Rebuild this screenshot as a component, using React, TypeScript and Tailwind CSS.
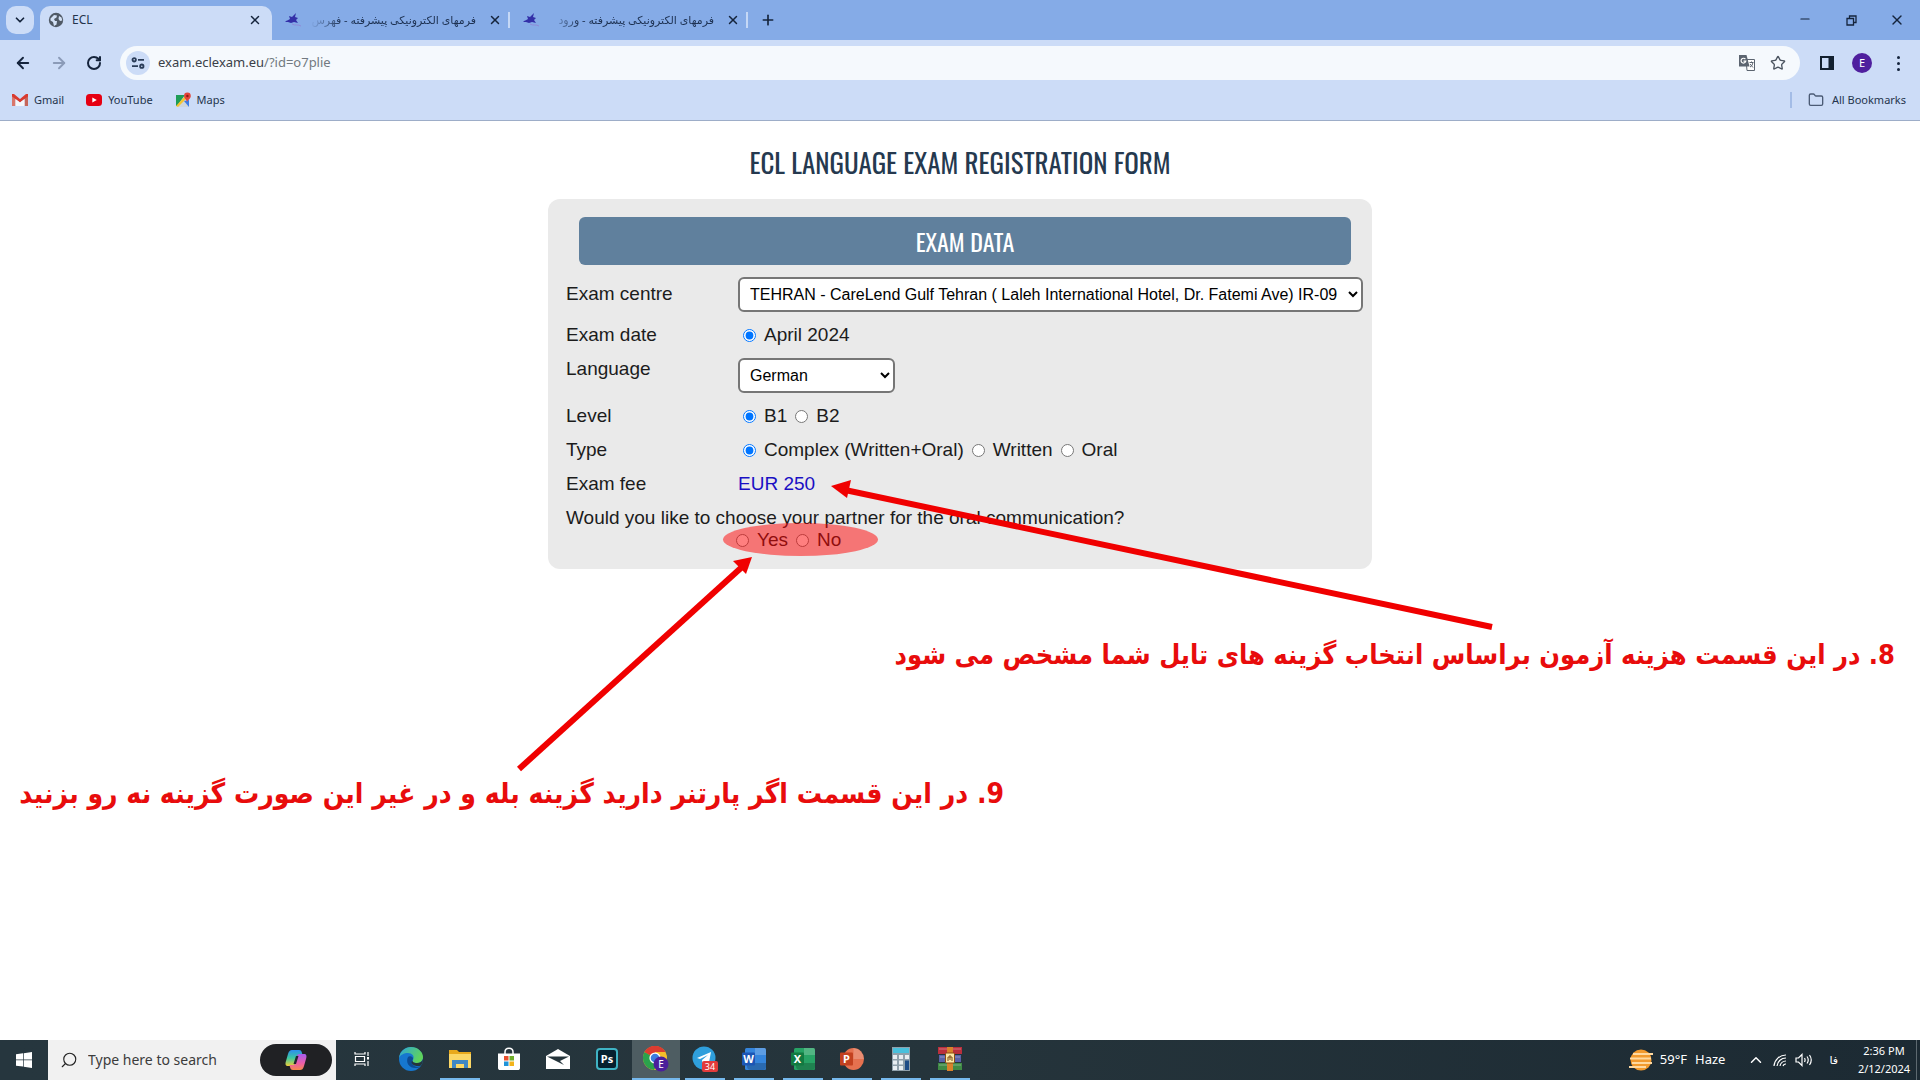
import type { ReactNode } from "react";
import {
  ArrowLeft,
  ArrowRight,
  ChevronDown,
  ChevronUp,
  Folder,
  Minus,
  Plus,
  RotateCw,
  Search,
  Star,
  X,
} from "lucide-react";

function GlobeIcon() {
  return (
    <svg viewBox="0 0 16 16" className="size-4 shrink-0">
      <circle cx="8" cy="8" r="7.2" fill="#505a66" />
      <path
        d="M2.5 6.5 6 3l3 .5-.5 2L6 7l1 2H9l-.5 3.500L6 14 5 10 2.500 8.500zM11 4l2.500 1.500.8 3-2.300.5-1.500-2z"
        fill="#d3e1f5"
      />
    </svg>
  );
}

function FormsIcon() {
  return (
    <svg viewBox="0 0 18 16" className="h-4 w-[18px] shrink-0">
      <path
        d="M1 10c2-2 4-2 5-3L5 4l3 1 4-4-1 4 3 1-2 2 2 3-4-1-3 1-3-1z"
        fill="#3330a8"
      />
      <path d="M8 12c3 2 6 0 9 2" stroke="#8f8ad8" fill="none" />
    </svg>
  );
}

function GmailIcon() {
  return (
    <svg viewBox="0 0 16 12" className="h-3 w-4">
      <path d="M0 1.500V12h3.500V5z" fill="#d9776c" />
      <path d="M16 1.500V12h-3.500V5z" fill="#c5655a" />
      <path d="M0 0h2l6 5 6-5h2v2.500L8 8.500 0 2.500z" fill="#d93a2f" />
      <path d="M3.500 5 8 8.500 12.500 5v7h-9z" fill="#f4f6fa" />
    </svg>
  );
}

function YouTubeIcon() {
  return (
    <svg viewBox="0 0 16 12" className="h-3 w-4">
      <rect width="16" height="12" rx="3.500" fill="#e60012" />
      <path d="m6.300 3.400 4.500 2.600-4.500 2.600z" fill="#fff" />
    </svg>
  );
}

function MapsIcon() {
  return (
    <svg viewBox="0 0 16 16" className="size-4">
      <path d="M1 3h9l-8 11H1z" fill="#1f9d57" />
      <path d="M2 15 9 7l5 8z" fill="#cfd6dc" />
      <path d="m1 14 10-11 2 2L3 15z" fill="#f5c431" />
      <path d="m9 9 5 6V8z" fill="#3a7ce8" />
      <path d="M12 10c0-2-3-3.500-3-6a3.400 3.400 0 0 1 6.800 0c0 2.500-3 4-3.800 6z" fill="#e2453a" />
      <circle cx="12.400" cy="4" r="1.200" fill="#8f1b14" />
    </svg>
  );
}

function TuneIcon() {
  return (
    <svg viewBox="0 0 14 14" className="size-3.5" fill="none" stroke="#2a3c58" strokeWidth="1.800">
      <circle cx="3.200" cy="3.800" r="1.700" />
      <path d="M7 3.800h6M1 10.200h6" />
      <circle cx="10.800" cy="10.200" r="1.700" />
    </svg>
  );
}

function TranslateIcon() {
  return (
    <svg viewBox="0 0 18 18" className="size-[18px]">
      <path d="M8 5.500h8.500v11H9z" fill="#fff" stroke="#5b6470" />
      <path d="M1 1h7.500l3 11.500H1z" fill="#5b6470" />
      <path d="M7.400 5.200a2.400 2.400 0 1 0 .4 2H5.500" fill="none" stroke="#fff" strokeWidth="1.200" />
      <path d="M11.500 8.500h4M13.500 7.500v1M12 13c2-1 2.600-2.500 2.800-4.500M12 10l3 3.500" fill="none" stroke="#5b6470" />
    </svg>
  );
}

function SidePanelIcon() {
  return (
    <svg viewBox="0 0 14 14" className="size-3.5">
      <rect x="1" y="1" width="12" height="12" fill="none" stroke="#13202f" strokeWidth="2" />
      <path d="M8.500 1H13v12H8.500z" fill="#13202f" />
    </svg>
  );
}

function RestoreIcon() {
  return (
    <svg viewBox="0 0 11 11" className="size-[11px]" fill="none" stroke="#15243c" strokeWidth="1.300">
      <path d="M1 3.500h6.500V10H1zM3.500 3.500V1H10v6.500H7.500" />
    </svg>
  );
}

function Tab({ icon, title }: { icon: ReactNode; title: string }) {
  return (
    <div className="flex h-8 w-[238px] items-center pl-3">
      {icon}
      <span
        dir="rtl"
        className="ml-2 h-5 w-[166px] overflow-hidden text-[11px] leading-5 whitespace-nowrap text-[#1d3152] [mask-image:linear-gradient(to_right,transparent,black_32px)]"
      >
        {title}
      </span>
      <button aria-label="Close tab" className="ml-3">
        <X className="size-3.5 text-[#15243c]" strokeWidth={2.5} />
      </button>
      <span className="ml-auto h-4 w-0.5 bg-[#c5d8f6]" />
    </div>
  );
}

function TabStrip() {
  return (
    <div className="flex h-10 items-center bg-[#85abe7]">
      <button
        aria-label="Search tabs"
        className="ml-1.5 flex size-7 items-center justify-center rounded-[10px] bg-[#ccdcf7]"
      >
        <ChevronDown className="size-3.5 text-[#15243c]" strokeWidth={3} />
      </button>
      <div className="ml-1.5 flex h-[34px] w-[232px] items-center self-end rounded-t-[10px] bg-[#ccdcf7] pr-2.5 pb-1.5 pl-2">
        <GlobeIcon />
        <span className="ml-2 grow text-xs text-[#24344c]">ECL</span>
        <button aria-label="Close tab">
          <X className="size-3.5 text-[#15243c]" strokeWidth={2.5} />
        </button>
      </div>
      <Tab icon={<FormsIcon />} title="فرمهای الکترونیکی پیشرفته - فهرس" />
      <Tab icon={<FormsIcon />} title="فرمهای الکترونیکی پیشرفته - ورود" />
      <button aria-label="New tab" className="ml-3">
        <Plus className="size-4 text-[#15243c]" strokeWidth={2.5} />
      </button>
      <div className="ml-auto flex text-[#15243c]">
        <button aria-label="Minimize" className="flex w-[46px] justify-center">
          <Minus className="size-3.5" strokeWidth={2} />
        </button>
        <button aria-label="Restore" className="flex w-[46px] items-center justify-center">
          <RestoreIcon />
        </button>
        <button aria-label="Close" className="flex w-[46px] justify-center">
          <X className="size-4" strokeWidth={2} />
        </button>
      </div>
    </div>
  );
}

function Toolbar() {
  return (
    <div className="flex h-[46px] items-center pr-[18px] pl-3.5 text-[#15243c]">
      <button aria-label="Back">
        <ArrowLeft className="size-[18px]" strokeWidth={2.5} />
      </button>
      <button aria-label="Forward" className="ml-[18px]">
        <ArrowRight className="size-[18px] text-[#8b9bb8]" strokeWidth={2.5} />
      </button>
      <button aria-label="Reload" className="ml-[18px]">
        <RotateCw className="size-4" strokeWidth={3} />
      </button>
      <div className="ml-[18px] flex h-[34px] grow items-center rounded-full bg-[#f5f9fd] pr-3.5 pl-1.5">
        <button
          aria-label="Site information"
          className="flex size-6 items-center justify-center rounded-full bg-[#ccdcf7]"
        >
          <TuneIcon />
        </button>
        <span className="ml-2 grow text-[13px] text-[#3a4048]">
          exam.eclexam.eu<span className="text-[#727980]">/?id=o7plie</span>
        </span>
        <button aria-label="Translate">
          <TranslateIcon />
        </button>
        <button aria-label="Bookmark" className="ml-3.5">
          <Star className="size-4 text-[#4b5460]" strokeWidth={2} />
        </button>
      </div>
      <button aria-label="Side panel" className="ml-5">
        <SidePanelIcon />
      </button>
      <button
        aria-label="Profile"
        className="ml-[18px] flex size-5 items-center justify-center rounded-full bg-[#4f1f9e] text-[11px] text-white"
      >
        E
      </button>
      <button aria-label="Menu" className="ml-[22px] flex w-2 flex-col items-center gap-[3px]">
        <span className="size-[3px] rounded-full bg-[#15243c]" />
        <span className="size-[3px] rounded-full bg-[#15243c]" />
        <span className="size-[3px] rounded-full bg-[#15243c]" />
      </button>
    </div>
  );
}

function BookmarkBar() {
  return (
    <div className="flex h-[34px] items-center pr-3.5 pb-1.5 pl-3 text-[11px] text-[#24344c]">
      <a href="#gmail" className="flex items-center gap-1.5">
        <GmailIcon />
        Gmail
      </a>
      <a href="#youtube" className="ml-[22px] flex items-center gap-1.5">
        <YouTubeIcon />
        YouTube
      </a>
      <a href="#maps" className="ml-[22px] flex items-center gap-1.5">
        <MapsIcon />
        Maps
      </a>
      <span className="ml-auto h-4 w-0.5 bg-[#a3bce6]" />
      <button className="ml-4 flex items-center gap-2">
        <Folder className="size-4 text-[#4b5b75]" />
        All Bookmarks
      </button>
    </div>
  );
}

function Row({ label, children }: { label: string; children: ReactNode }) {
  return (
    <div role="group" aria-label={label} className="flex">
      <span className="w-[172px] shrink-0">{label}</span>
      {children}
    </div>
  );
}

function Radio({ name, label, checked }: { name: string; label: string; checked?: boolean }) {
  return (
    <label className="flex items-center">
      <input type="radio" name={name} defaultChecked={checked} className="size-[13px]" />
      <span className="ml-2">{label}</span>
    </label>
  );
}

function ExamForm() {
  return (
    <form className="mx-auto mt-[17px] flex w-full max-w-[824px] flex-col gap-3 rounded-xl bg-[#eaeaea] pt-[18px] pr-[9px] pb-[18px] pl-[18px] text-[19px] leading-[22px] text-[#1c1c1c]">
      <h2 className="mr-3 ml-[13px] h-12 rounded-md bg-[#60809d] text-center font-['Oswald','Liberation_Sans_Narrow',sans-serif] text-2xl leading-[48px] text-white">
        EXAM DATA
      </h2>
      <div className="flex">
        <label htmlFor="centre" className="w-[172px] shrink-0 pt-1.5">
          Exam centre
        </label>
        <select
          id="centre"
          className="h-[35px] min-w-0 grow rounded-md border-2 border-[#767676] bg-white px-1.5 text-base text-black"
        >
          <option>TEHRAN - CareLend Gulf Tehran ( Laleh International Hotel, Dr. Fatemi Ave) IR-09</option>
        </select>
      </div>
      <Row label="Exam date">
        <div className="pl-[5px]">
          <Radio name="date" label="April 2024" checked />
        </div>
      </Row>
      <div className="flex">
        <label htmlFor="language" className="w-[172px] shrink-0">
          Language
        </label>
        <select
          id="language"
          className="h-[35px] w-[157px] rounded-md border-2 border-[#767676] bg-white px-1.5 text-base text-black"
        >
          <option>German</option>
          <option>English</option>
        </select>
      </div>
      <Row label="Level">
        <div className="flex gap-2 pl-[5px]">
          <Radio name="level" label="B1" checked />
          <Radio name="level" label="B2" />
        </div>
      </Row>
      <Row label="Type">
        <div className="flex gap-2 pl-[5px]">
          <Radio name="type" label="Complex (Written+Oral)" checked />
          <Radio name="type" label="Written" />
          <Radio name="type" label="Oral" />
        </div>
      </Row>
      <Row label="Exam fee">
        <span className="text-[#1a0fc4]">EUR 250</span>
      </Row>
      <div role="group" aria-labelledby="partner">
        <p id="partner">Would you like to choose your partner for the oral communication?</p>
        <div className="flex gap-2 pl-[170px]">
          <Radio name="partner" label="Yes" />
          <Radio name="partner" label="No" />
        </div>
      </div>
    </form>
  );
}

// Hand-drawn notes that lie over the page, centred with the form.
function Annotations() {
  return (
    <div className="pointer-events-none absolute top-0 left-1/2 h-[919px] w-[1920px] -translate-x-1/2 font-['DejaVu_Sans_Condensed','DejaVu_Sans',sans-serif] leading-10 font-bold whitespace-nowrap text-[#e80c0c]">
      <svg viewBox="0 121 1920 919" className="absolute inset-0 size-full">
        <ellipse cx="800.500" cy="539.500" rx="77.500" ry="16.500" fill="#ff0000" fillOpacity="0.5" />
        <path d="M1492 627 845 490" stroke="#f00000" strokeWidth="6" />
        <path d="m831 486 20-6-4 18z" fill="#f00000" />
        <path d="M519 769 742 567" stroke="#f00000" strokeWidth="6" />
        <path d="m752 557-6 17-13-13z" fill="#f00000" />
      </svg>
      <p dir="rtl" className="absolute top-[514px] right-[25px] text-[27px]">
        8. در این قسمت هزینه آزمون براساس انتخاب گزینه های تایل شما مشخص می شود
      </p>
      <p dir="rtl" className="absolute top-[653px] right-[916px] text-[28px]">
        9. در این قسمت اگر پارتنر دارید گزینه بله و در غیر این صورت گزینه نه رو بزنید
      </p>
    </div>
  );
}

function WindowsLogo() {
  return (
    <svg viewBox="0 0 16 16" className="size-4" fill="#fff">
      <path d="M0 2.300 7 1.300v6.300H0zM7.700 1.200 16 0v7.600H7.700zM0 8.300h7v6.300L0 13.700zM7.700 8.300H16V16l-8.300-1.200z" />
    </svg>
  );
}

function CopilotIcon() {
  return (
    <svg viewBox="0 0 24 24" className="size-6">
      <defs>
        <linearGradient id="cp-a" x1="0" y1="0" x2="0" y2="1">
          <stop offset="0" stopColor="#2c8df0" />
          <stop offset="0.5" stopColor="#3cc8a0" />
          <stop offset="1" stopColor="#f3cf35" />
        </linearGradient>
        <linearGradient id="cp-b" x1="0" y1="0" x2="0" y2="1">
          <stop offset="0" stopColor="#a45cf0" />
          <stop offset="0.6" stopColor="#ee5fa4" />
          <stop offset="1" stopColor="#f58a4a" />
        </linearGradient>
      </defs>
      <path d="M8 2h7c2 0 2.500 1 3 3l.5 2h-5L11 16c-.5 2-1 2.500-3 2H4c-2.500 0-3-2-2-5l2-7c1-3 2-4 4-4z" fill="url(#cp-a)" />
      <path d="M16 22H9c-2 0-2.500-1-3-3l-.5-2h5L13 8c.5-1.500 1-2 3-2h4c2.500 0 3 2 2 5l-2 7c-1 3-2 4-4 4z" fill="url(#cp-b)" />
      <path d="m12 8-2.500 8H12l2.500-8z" fill="#20262c" />
    </svg>
  );
}

function TaskViewIcon() {
  return (
    <svg viewBox="0 0 16 16" className="size-4" fill="none" stroke="#fff" strokeWidth="1.200">
      <path d="M1 1v2h10V1M1 15v-2h10v2M1.500 5.500h9v5h-9zM14 1v4M14 10v5" />
      <path d="M13 6h2v2.500h-2z" fill="#fff" stroke="none" />
    </svg>
  );
}

function EdgeIcon() {
  return (
    <svg viewBox="0 0 24 24" className="size-6">
      <defs>
        <linearGradient id="edge-a" x1="0" y1="0" x2="1" y2="0.4">
          <stop offset="0" stopColor="#2ba5dd" />
          <stop offset="1" stopColor="#5fd35b" />
        </linearGradient>
      </defs>
      <circle cx="12" cy="12" r="12" fill="#1677cf" />
      <path d="M0 11C1 4 6 0 12 0c7 0 12 5 12 10 0 4-3 6-6 6s-5-1-4-3c2-4-1-7-5-7-4 0-8 2-9 5z" fill="url(#edge-a)" />
      <path d="M9 10c-3 6 2 12 9 11 2-.3 3.500-1.500 4-2-4 2-9 0-9-4 0-2 1-2 1-4-1-2-4-2-5-1z" fill="#0c4b93" />
      <path d="M14 12.500c-1.500 2 .5 3.500 4 3.500 3 0 5-1.500 6-4 0 3-1 5-2 6.500-4 1.500-9 0-9.500-3.500z" fill="#25343b" />
    </svg>
  );
}

function ExplorerIcon() {
  return (
    <svg viewBox="0 0 24 20" className="h-5 w-6">
      <path d="M1 1h8l2 2h12v5H1z" fill="#e8a91c" />
      <path d="M1 5h22v14H1z" fill="#fbd766" />
      <path d="M4 11h16v8h-4v-4H8v4H4z" fill="#3f87c4" />
    </svg>
  );
}

function StoreIcon() {
  return (
    <svg viewBox="0 0 24 24" className="size-6">
      <path d="M8 8V5c0-5 8-5 8 0v3" fill="none" stroke="#fff" strokeWidth="1.500" />
      <path d="M1 6.500h22V21c0 1.500-1 2-2 2H3c-1 0-2-.5-2-2z" fill="#fff" />
      <path d="M7 9h4.500v4.500H7z" fill="#e8502e" />
      <path d="M12.500 9H17v4.500h-4.500z" fill="#6fae2a" />
      <path d="M7 14.500h4.500V19H7z" fill="#2093d8" />
      <path d="M12.500 14.500H17V19h-4.500z" fill="#f3b41b" />
    </svg>
  );
}

function MailIcon() {
  return (
    <svg viewBox="0 0 24 20" className="h-5 w-6">
      <path d="M0 7 12 0l12 7v13H0z" fill="#fff" />
      <path d="M1 7.500h22L14 12l4 4z" fill="#25343b" />
    </svg>
  );
}

function ChromeIcon() {
  return (
    <svg viewBox="0 0 26 26" className="size-[26px]">
      <circle cx="12" cy="12" r="12" fill="#f5bd2a" />
      <path d="M12 12 1.600 6A12 12 0 0 1 22.400 6H12z" fill="#db3c30" />
      <path d="M12 12 1.600 6A12 12 0 0 0 11 24l5-9z" fill="#2ba24c" />
      <path d="M1.600 6A12 12 0 0 1 22.400 6H12L7 9z" fill="#db3c30" />
      <circle cx="12" cy="12" r="5.600" fill="#fff" />
      <circle cx="12" cy="12" r="4.300" fill="#3b7de0" />
      <circle cx="18" cy="18" r="7.500" fill="#4b1f9b" />
      <text x="18" y="21.500" textAnchor="middle" fontSize="10" fill="#fff">
        E
      </text>
    </svg>
  );
}

function TelegramIcon() {
  return (
    <svg viewBox="0 0 28 26" className="h-[26px] w-7">
      <circle cx="13" cy="12" r="11.500" fill="#2f9fdc" />
      <path d="m6 12 14-6-2.500 13-4-3-2 2-.5-4 6-5-8 4z" fill="#fff" />
      <rect x="11" y="15" width="16" height="11" rx="2" fill="#e23b3b" />
      <text x="19" y="24" textAnchor="middle" fontSize="9" fill="#fff">
        34
      </text>
    </svg>
  );
}

function OfficeIcon({ letter, dark, light, round }: { letter: string; dark: string; light: string; round?: boolean }) {
  return (
    <svg viewBox="0 0 24 24" className="size-6">
      <rect x="3" y="1" width="21" height="22" rx={round ? 11 : 1.5} fill={light} />
      {!round && <path d="M13 1h9.500q1.500 0 1.500 3v4H13z" fill="#fff" fillOpacity="0.2" />}
      {!round && <path d="M5 16h19v4q0 3-3 3H9q-4 0-4-4z" fill="#000" fillOpacity="0.2" />}
      {round && <path d="M13.500 1A11 11 0 0 1 24 12H13.500z" fill="#fff" fillOpacity="0.2" />}
      <rect x="0" y="5.500" width="13" height="13" rx="1" fill={dark} />
      <text x="6.500" y="16" textAnchor="middle" fontSize="11" fontWeight="700" fill="#fff">
        {letter}
      </text>
    </svg>
  );
}

function CalculatorIcon() {
  return (
    <svg viewBox="0 0 18 24" className="h-6 w-[18px]">
      <rect width="18" height="24" fill="#8fa0ab" />
      <path d="M1 1h16v5H1z" fill="#49c0dc" />
      <path d="M1 8h4v4H1zM7 8h4v4H7zM13 8h4v4h-4zM1 13.500h4v4H1zM7 13.500h4v4H7zM1 19h4v4H1zM7 19h4v4H7z" fill="#e8eef2" />
      <path d="M13 13.500h4V23h-4z" fill="#1d4c86" />
    </svg>
  );
}

function WinRarIcon() {
  return (
    <svg viewBox="0 0 26 24" className="h-6 w-[26px]">
      <path d="M1 0h24v7H1z" fill="#b92f3c" />
      <path d="M2 8h22v7H2z" fill="#5a62a8" />
      <path d="M1 16h24v7H1z" fill="#3f8a45" />
      <path d="M2 2h22M3 10h20M2 18h22" stroke="#fff" strokeOpacity="0.35" />
      <path d="M10 0h6v24h-6z" fill="#d9822b" />
      <rect x="8.500" y="6" width="9" height="10" rx="1" fill="#fbe9a6" stroke="#8a4a12" />
      <path d="M11 14v-4h4v4M13 8v5" stroke="#7a4a12" fill="none" />
    </svg>
  );
}

const apps = [
  { name: "Task View", icon: <TaskViewIcon />, open: false, active: false },
  { name: "Edge", icon: <EdgeIcon />, open: false, active: false },
  { name: "File Explorer", icon: <ExplorerIcon />, open: true, active: false },
  { name: "Store", icon: <StoreIcon />, open: false, active: false },
  { name: "Mail", icon: <MailIcon />, open: false, active: false },
  {
    name: "Photoshop",
    icon: (
      <span className="flex size-[22px] items-center justify-center rounded-sm border-2 border-[#3fb3c4] bg-[#06202e] text-[11px] font-bold text-white">
        Ps
      </span>
    ),
    open: false,
    active: false,
  },
  { name: "Chrome", icon: <ChromeIcon />, open: true, active: true },
  { name: "Telegram", icon: <TelegramIcon />, open: true, active: false },
  { name: "Word", icon: <OfficeIcon letter="W" dark="#1c56b5" light="#3585dc" />, open: true, active: false },
  { name: "Excel", icon: <OfficeIcon letter="X" dark="#127a41" light="#27a365" />, open: true, active: false },
  { name: "PowerPoint", icon: <OfficeIcon letter="P" dark="#c3411f" light="#e5714f" round />, open: true, active: false },
  { name: "Calculator", icon: <CalculatorIcon />, open: true, active: false },
  { name: "WinRAR", icon: <WinRarIcon />, open: true, active: false },
];

function Taskbar() {
  return (
    <footer className="flex h-10 items-center bg-linear-to-r from-[#26363e] via-[#25343b] to-[#1c2a33] text-white">
      <button aria-label="Start" className="flex h-10 w-12 items-center justify-center">
        <WindowsLogo />
      </button>
      <div className="flex h-10 w-72 items-center bg-[#f1f1f1] pr-1 pl-3">
        <Search className="size-[18px] -scale-x-100 text-[#222]" strokeWidth={1.5} />
        <input
          aria-label="Search"
          placeholder="Type here to search"
          className="ml-2.5 w-[172px] text-sm placeholder:text-[#3c3c3c]"
        />
        <button
          aria-label="Copilot"
          className="flex h-8 w-[72px] items-center justify-center rounded-full bg-[#202124]"
        >
          <CopilotIcon />
        </button>
      </div>
      <div className="ml-0.5 flex gap-px">
        {apps.map((app) => (
          <button
            key={app.name}
            aria-label={app.name}
            className={`flex h-10 w-12 flex-col items-center ${app.active ? "bg-[#4e5d62]" : ""}`}
          >
            <span className="flex h-[38px] items-center">{app.icon}</span>
            {app.open && <span className={`h-0.5 bg-[#76b9ed] ${app.active ? "w-full" : "w-10"}`} />}
          </button>
        ))}
      </div>
      <div className="ml-auto flex items-center text-[13px]">
        <svg viewBox="0 0 26 22" className="h-[22px] w-[26px]">
          <circle cx="13" cy="11" r="10.500" fill="#f29a2e" />
          <path d="M5 5h20M2 9.500h21M4 14h20M1 18h17" stroke="#ffd9a0" strokeWidth="1.800" />
        </svg>
        <span className="ml-1.5">59°F</span>
        <span className="ml-2">Haze</span>
        <button aria-label="Show hidden icons" className="ml-[22px]">
          <ChevronUp className="size-[18px]" strokeWidth={2} />
        </button>
        <svg viewBox="0 0 14 14" className="ml-2 size-3.5" fill="none" stroke="#fff" strokeWidth="1.200">
          <path d="M1 13A12 12 0 0 1 13 2M4 13a9 9 0 0 1 9-8M7 13a6 6 0 0 1 6-5M10 13a3 3 0 0 1 3-2" />
        </svg>
        <svg viewBox="0 0 18 14" className="ml-2 h-3.5 w-[18px]" fill="none" stroke="#fff" strokeWidth="1.200">
          <path d="M1 5h2.500L7 1.500v11L3.500 9H1zM9.500 5q1.200 2 0 4M12 3.500q2.500 3.500 0 7M14.500 2q3.500 5 0 10" />
        </svg>
        <span className="ml-4 text-[11px]">فا</span>
        <div className="ml-4 w-[60px] text-center text-[11px] leading-[18px]">
          <div>2:36 PM</div>
          <div>2/12/2024</div>
        </div>
        <span className="ml-0.5 h-10 w-1 border-l border-[#5d6970]" />
      </div>
    </footer>
  );
}

export default function App() {
  return (
    <div className="flex min-h-screen flex-col overflow-x-hidden bg-white font-['Noto_Sans','DejaVu_Sans',sans-serif]">
      <header className="border-b border-[#9dadc8] bg-[#ccdcf7]">
        <TabStrip />
        <Toolbar />
        <BookmarkBar />
      </header>
      <main className="relative grow pt-[21px] font-['Liberation_Sans','DejaVu_Sans',sans-serif]">
        <h1 className="text-center font-['Oswald','Liberation_Sans_Narrow',sans-serif] text-[27px] leading-10 text-[#25394f]">
          ECL LANGUAGE EXAM REGISTRATION FORM
        </h1>
        <ExamForm />
        <Annotations />
      </main>
      <Taskbar />
    </div>
  );
}
